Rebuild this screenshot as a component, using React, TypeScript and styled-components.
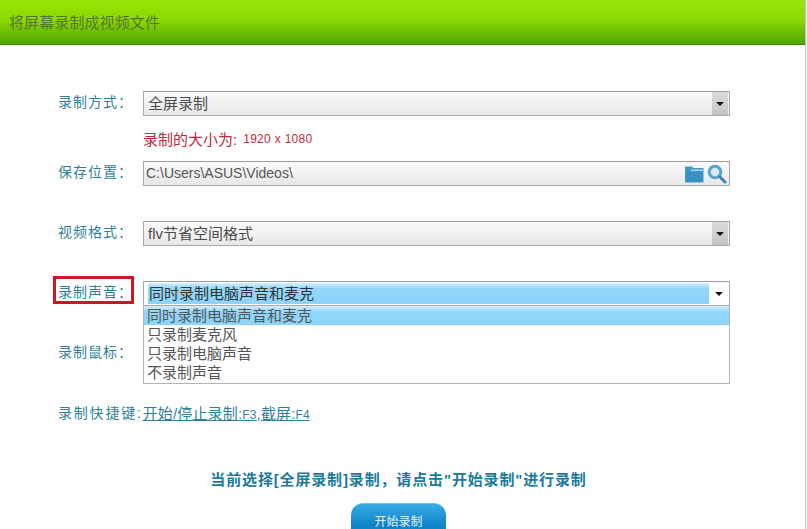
import * as React from 'react';
import styled, { createGlobalStyle } from 'styled-components';

const GlobalStyle = createGlobalStyle`
html, body { margin: 0; padding: 0; background: #fff; overflow: hidden; }
body { font-family: "Liberation Sans", "Noto Sans CJK SC", sans-serif; }
`;

const Page = styled.div`
  width: 806px;
  height: 529px;
  overflow: hidden;
  box-sizing: border-box;
  border-right: 1px solid #c4c4c4;
`;

const Header = styled.div`
  height: 45px;
  box-sizing: border-box;
  padding: 0 0 2px 9px;
  display: flex;
  align-items: center;
  background: linear-gradient(#97e508 0%, #8cd904 45%, #4fa400 100%);
  border-bottom: 1px solid #3c8a02;
  color: #55752f;
  font-size: 15px;
  letter-spacing: 0.1px;
`;

const Form = styled.div`
  padding: 46px 0 0 58px;
`;

const Row = styled.div<{ $after?: number }>`
  display: flex;
  align-items: center;
  height: 25px;
  margin-bottom: ${p => p.$after ?? 35}px;
  position: relative;
`;

const Label = styled.div`
  width: 85px;
  flex: none;
  padding-bottom: 5px;
  color: #2f7f98;
  font-size: 14px;
  letter-spacing: 1px;
  white-space: nowrap;
`;

const Marked = styled.div`
  position: absolute;
  left: -5px;
  top: -5px;
  width: 81px;
  height: 28px;
  box-sizing: border-box;
  border: 3px solid #cc1622;
`;

const Control = styled.div<{ $open?: boolean }>`
  position: relative;
  width: 587px;
  height: 25px;
  box-sizing: border-box;
  border: 1px solid #a8a8a8;
  border-top-color: #9a9a9a;
  background: ${p => (p.$open ? '#fff' : 'linear-gradient(#fafafa, #e8e8e8)')};
  display: flex;
  align-items: center;
  padding-left: 4px;
  color: #4a4a4a;
  font-size: 15px;
  white-space: nowrap;
`;

const ControlText = styled.span`
  padding-bottom: 2px;
`;

const Chosen = styled.div`
  flex: 1;
  align-self: stretch;
  margin: 1px 0;
  display: flex;
  align-items: center;
  padding: 0 0 2px 1px;
  background: linear-gradient(#d6effd 0%, #92d7fb 25%, #8cd4fa 100%);
  color: #333;
`;

const Arrow = styled.div<{ $open?: boolean }>`
  flex: none;
  width: ${p => (p.$open ? 20 : 16)}px;
  margin-right: ${p => (p.$open ? 0 : 1)}px;
  margin-left: ${p => (p.$open ? 0 : 'auto')};
  align-self: stretch;
  background: ${p => (p.$open ? '#fff' : 'linear-gradient(#dcdcdc, #c4c4c4)')};
  display: flex;
  align-items: center;
  justify-content: center;
  &::before {
    content: '';
    border-left: 4px solid transparent;
    border-right: 4px solid transparent;
    border-top: 4px solid #111;
  }
`;

const Path = styled.span`
  flex: 1;
  margin-left: -2px;
  padding-bottom: 2px;
  font-size: 14px;
  color: #555;
`;

const Tools = styled.div`
  display: flex;
  align-items: center;
  gap: 3px;
  margin-right: 2px;
`;

const Hint = styled.div`
  margin: -35px 0 0 85px;
  height: 45px;
  display: flex;
  align-items: center;
  color: #c2283a;
  font-size: 15px;
  span { font-size: 12px; margin-left: 6px; letter-spacing: 0.3px; }
`;

const List = styled.div`
  position: absolute;
  left: 85px;
  top: 25px;
  width: 587px;
  height: 78px;
  box-sizing: border-box;
  border: 1px solid #b0b6b8;
  border-top: 0;
  background: #fff;
  z-index: 2;
`;

const Option = styled.div<{ $on?: boolean }>`
  height: 19px;
  line-height: 19px;
  padding-left: 3px;
  font-size: 15px;
  color: #555;
  background: ${p => (p.$on ? 'linear-gradient(#d6effd 0%, #92d7fb 30%, #8cd4fa 100%)' : 'transparent')};
`;

const Hotkey = styled.div`
  display: flex;
  align-items: center;
  color: #2f7f98;
  font-size: 14px;
  letter-spacing: 1.8px;
  height: 20px;
  white-space: nowrap;
  a {
    color: #2f7f98;
    text-decoration: underline;
    letter-spacing: 0.15px;
    font-size: 15px;
  }
  small { font-size: 12px; }
`;

const Message = styled.div`
  margin-top: 46px;
  padding-right: 8px;
  text-align: center;
  color: #1c7a9c;
  font-size: 15px;
  font-weight: 700;
  letter-spacing: 0.85px;
  height: 24px;
  line-height: 24px;
  white-space: nowrap;
`;

const Footer = styled.div`
  display: flex;
  justify-content: center;
  padding-right: 8px;
  margin-top: 11px;
`;

const StartButton = styled.button`
  width: 95px;
  height: 44px;
  padding: 0 0 11px;
  border: 0;
  border-radius: 12px;
  border-top: 1px solid #6cc4ea;
  background: linear-gradient(#37ace6, #0f82c8 50%);
  color: #e6f4fb;
  font-family: inherit;
  font-size: 12px;
`;

const FolderIcon = () => (
  <svg width="19" height="18" viewBox="0 0 19 18">
    <path d="M0 1.5 L7 1.5 L8.5 3 L18.5 3 L18.5 17.5 L0 17.5 Z" fill="#3f98cc" />
    <path d="M6 4.5 L18 4.5 L18 6 L6 6 Z" fill="#a6d4ea" />
    <path d="M1 7 L18 7 L18 17 L1 17 Z" fill="#3a8fc4" />
  </svg>
);

const SearchIcon = () => (
  <svg width="20" height="20" viewBox="0 0 20 20">
    <circle cx="8" cy="8" r="5.8" fill="#d7ebf5" stroke="#5aa3cb" strokeWidth="3" />
    <path d="M12.8 12.8 L18 18" stroke="#3d85ad" strokeWidth="3" strokeLinecap="round" />
  </svg>
);

const App = () => (
  <Page>
    <GlobalStyle />
    <Header>将屏幕录制成视频文件</Header>
    <Form>
      <Row>
        <Label>录制方式：</Label>
        <Control><ControlText>全屏录制</ControlText><Arrow /></Control>
      </Row>
      <Hint>录制的大小为:<span>1920 x 1080</span></Hint>
      <Row>
        <Label>保存位置：</Label>
        <Control>
          <Path>C:\Users\ASUS\Videos\</Path>
          <Tools><FolderIcon /><SearchIcon /></Tools>
        </Control>
      </Row>
      <Row>
        <Label>视频格式：</Label>
        <Control><ControlText>flv节省空间格式</ControlText><Arrow /></Control>
      </Row>
      <Row>
        <Marked />
        <Label>录制声音：</Label>
        <Control $open>
          <Chosen>同时录制电脑声音和麦克</Chosen>
          <Arrow $open />
        </Control>
        <List>
          <Option $on>同时录制电脑声音和麦克</Option>
          <Option>只录制麦克风</Option>
          <Option>只录制电脑声音</Option>
          <Option>不录制声音</Option>
        </List>
      </Row>
      <Row $after={36}>
        <Label>录制鼠标：</Label>
      </Row>
      <Hotkey>录制快捷键:<a href="#">开始/停止录制:<small>F3</small>,截屏:<small>F4</small></a></Hotkey>
    </Form>
    <Message>当前选择[全屏录制]录制，请点击"开始录制"进行录制</Message>
    <Footer>
      <StartButton>开始录制</StartButton>
    </Footer>
  </Page>
);

export default App;
